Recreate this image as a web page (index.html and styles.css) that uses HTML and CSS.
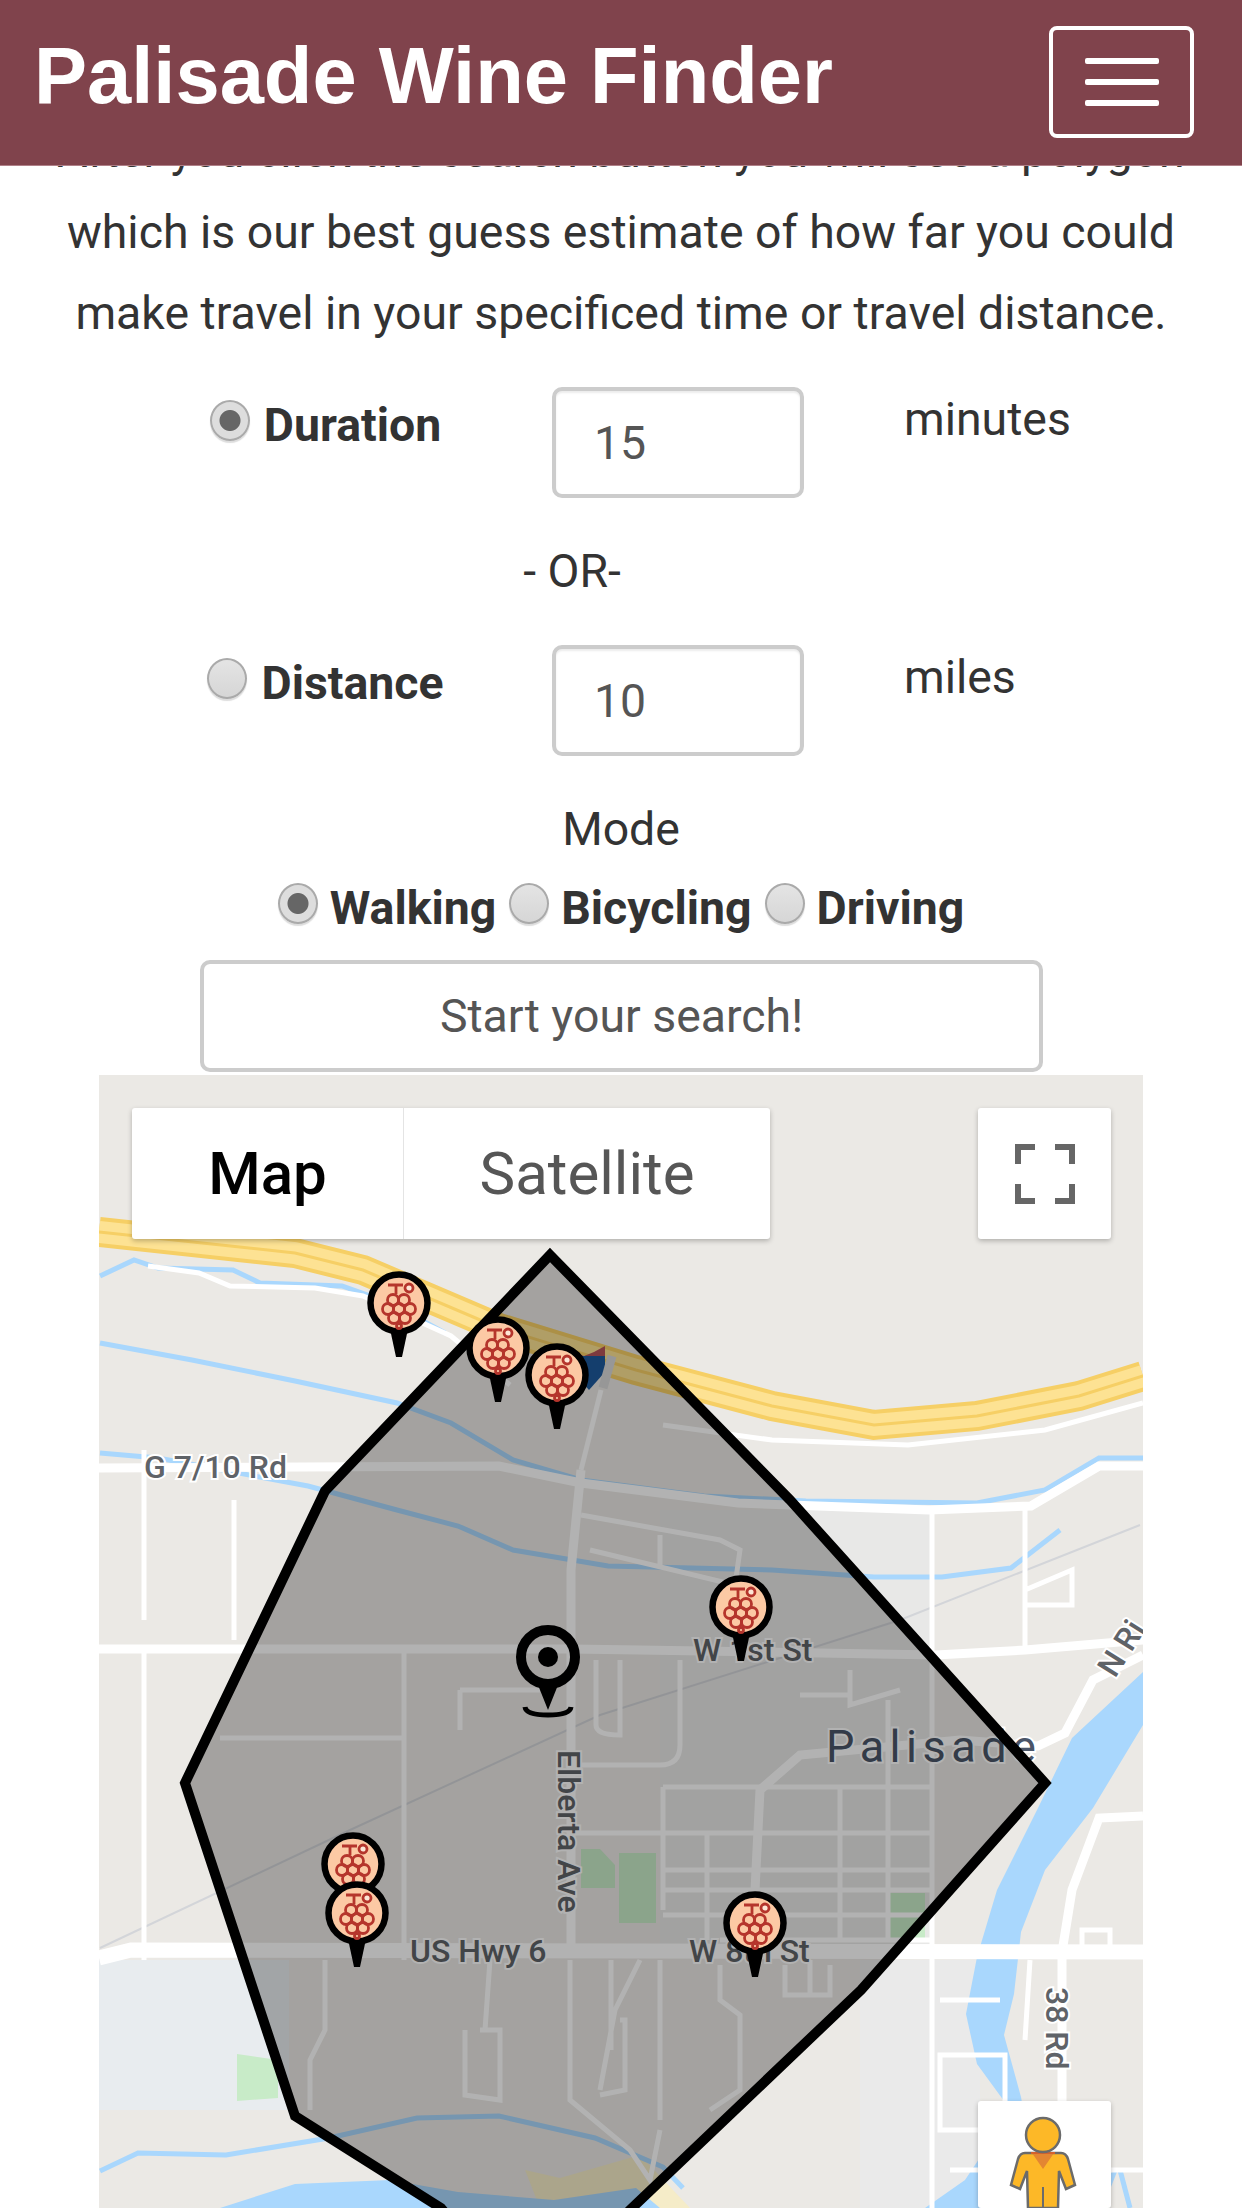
FILE: index.html
```html
<!DOCTYPE html>
<html lang="en">
<head>
  <meta charset="UTF-8">
  <title>Palisade Wine Finder</title>
  <link rel="stylesheet" href="styles.css">
</head>
<body>
  <header class="navbar">
    <span class="brand">Palisade Wine Finder</span>
    <button class="toggle" type="button" aria-label="Menu"><i></i><i></i><i></i></button>
  </header>

  <main>
    <p class="intro">After you click the search button you will see a polygon<br>which is our best guess estimate of how far you could<br>make travel in your specificed time or travel distance.</p>

    <div class="limit-row">
      <label class="limit-label"><input type="radio" name="limit" checked>Duration</label>
      <input class="limit-input" type="text" value="15">
      <span class="limit-unit">minutes</span>
    </div>
    <div class="or">- OR-</div>
    <div class="limit-row">
      <label class="limit-label"><input type="radio" name="limit">Distance</label>
      <input class="limit-input" type="text" value="10">
      <span class="limit-unit">miles</span>
    </div>

    <div class="mode-title">Mode</div>
    <div class="mode-row">
      <label><input type="radio" name="mode" checked>Walking</label>
      <label><input type="radio" name="mode">Bicycling</label>
      <label><input type="radio" name="mode">Driving</label>
    </div>
    <button class="search" type="button">Start your search!</button>

    <div class="map">
      <svg class="map-canvas" width="1044" height="1133" viewBox="99 1075 1044 1133">
        <defs>
          <symbol id="wine-pin" viewBox="-35 -35 70 100" overflow="visible">
            <path d="M-9 26 L-3 54 H3 L9 26 Z" fill="#000"/>
            <circle r="28.5" fill="#fcc9a4" stroke="#000" stroke-width="6.5"/>
            <g fill="none" stroke="#b5352c" stroke-width="2.8">
              <path d="M-11 -18 H4 M-3 -18 V-9"/>
              <circle cx="-6" cy="-3" r="5.5"/>
              <circle cx="5" cy="-3" r="5.5"/>
              <circle cx="-11" cy="6" r="5.5"/>
              <circle cx="0" cy="6" r="5.5"/>
              <circle cx="11" cy="6" r="5.5"/>
              <circle cx="-5" cy="15" r="5.5"/>
              <circle cx="6" cy="15" r="5.5"/>
              <circle cx="0" cy="23" r="2.5"/>
              <circle cx="10" cy="-15" r="4" fill="#fde6d6"/>
            </g>
          </symbol>
        </defs>

        <rect x="99" y="1075" width="1044" height="1133" fill="#ebe9e5"/>
        <rect x="99" y="1960" width="190" height="150" fill="#e8ecef"/>
        <rect x="660" y="1510" width="270" height="440" fill="#e8e8e7"/>
        <rect x="860" y="1960" width="120" height="250" fill="#eaeaea"/>

        <path class="park" d="M237 2054 L278 2060 L278 2098 L237 2101 Z"/>
        <path class="park" d="M581 1849 L600 1849 L615 1865 L615 1888 L581 1888 Z"/>
        <path class="park" d="M619 1853 L656 1853 L656 1923 L619 1923 Z"/>
        <path class="park" d="M888 1893 L925 1893 L925 1940 L888 1940 Z"/>
        <path class="sand" d="M525 2170 L560 2178 L640 2155 L690 2208 L540 2208 Z"/>

        <!-- water -->
        <path class="river" d="M1143 1672 L1072 1738 L1038 1808 L997 1890 L977 1957 L966 2014 L977 2064 L1004 2101 L985 2150 L965 2180 L925 2208 L1040 2208 L1021 2097 L1004 2035 L1014 1994 L1021 1932 L1045 1870 L1093 1808 L1143 1725 Z"/>
        <path class="river" d="M220 2208 L295 2184 L390 2180 L458 2192 L554 2200 L636 2188 L660 2208 Z"/>
        <path class="creek" d="M100 1276 L134 1260 L158 1268 L233 1270 L260 1283 L342 1286 L390 1303 L445 1333"/>
        <path class="creek" d="M100 1343 L192 1360 L295 1381 L397 1403 L451 1423 L513 1460 L581 1480 L704 1496 L806 1501 L977 1503 L1045 1490 L1099 1458 L1143 1458"/>
        <path class="creek" d="M100 1453 L158 1458 L308 1486 L397 1510 L458 1526 L513 1550 L608 1566 L772 1570 L874 1577 L942 1577 L1011 1568 L1060 1530"/>
        <path class="creek" d="M100 2171 L138 2153 L226 2155 L329 2138 L417 2118 L499 2116 L595 2138 L663 2167 L683 2188"/>
        <path class="creek" d="M1120 2170 L1130 2208 M1100 2208 L1115 2170"/>

        <!-- roads -->
        <path class="rail" d="M100 1948 L350 1830 L600 1715 L900 1620 L1140 1525"/>
        <path class="road-sm" d="M148 1266 L199 1273 L230 1286 L315 1288 L363 1296 L451 1336 L510 1385"/>
        <path class="road-sm" d="M663 1425 L772 1440 L908 1445 L1045 1430 L1143 1403"/>
        <path class="road-sm" d="M601 1390 L581 1470"/>
        <path class="road-sm" d="M144 1450 V1620 M234 1500 V1640 M144 1650 V1960"/>
        <path class="road" d="M99 1468 L499 1466 L581 1483 L738 1503 L929 1510 L1031 1506 L1099 1466 L1143 1466"/>
        <path class="road-sm" d="M581 1515 L720 1540 L740 1550 L735 1585 L590 1550 M660 1535 V1565"/>
        <path class="road" d="M581 1470 L571 1570 L571 1944"/>
        <path class="road" d="M99 1649 H571 L640 1650 L936 1655 L1025 1650 L1143 1640"/>
        <path class="road-lg" d="M99 1958 L131 1950 L1143 1952"/>
        <path class="road" d="M1143 1655 L1093 1680 L1065 1733 L1038 1746 L960 1740 L800 1755 L760 1790 L752 1950"/>
        <path class="road" d="M1143 1816 L1099 1818 L1072 1890 L1062 1952 L1062 2101"/>
        <path class="road-sm" d="M663 1787 V1910 M707 1833 V1940 M840 1787 V1940 M888 1700 V1940 M932 1510 V2208 M1025 1510 V1650 M1025 1590 L1072 1570 V1605 H1025"/>
        <path class="road-sm" d="M663 1787 H932 M575 1833 H932 M663 1870 H932 M663 1890 H932 M663 1915 H932 M720 1940 H932"/>
        <path class="road-sm" d="M404 1650 V1960 M220 1738 H404 M596 1660 V1725 Q596 1735 620 1735 V1660 M680 1660 V1745 Q680 1765 660 1765 H580"/>
        <path class="road-sm" d="M460 1690 H540 M460 1690 V1730 M850 1670 V1705 L900 1690 M800 1695 H850"/>
        <path class="road-sm" d="M611 1960 V2050 M640 1960 L615 2010 L600 2090 M660 1960 V2120 M620 2020 H625 V2090 L600 2095 M480 2030 H500 V2100 L465 2095 V2030 M570 1960 V2100 L630 2150 L650 2180 L660 2130"/>
        <path class="road-sm" d="M325 1960 V2030 L310 2060 V2110 M490 1960 L485 2030 M720 1965 V2000 L740 2015 V2090 L710 2110"/>
        <path class="road-sm" d="M785 1965 V1995 H830 V1965 M810 1960 V1995 M940 2000 H1000 M940 2055 V2130 H1005 V2055 Z M1000 2170 H950 M1030 1960 L1025 2040"/>
        <path class="road-sm" d="M1082 1930 H1110 V1950 H1082 Z M1143 2170 H1090"/>

        <!-- I-70 -->
        <path d="M1143 1376 L1079 1396 L977 1416 L874 1425 L772 1406 L636 1370 L499 1328 L363 1270 L295 1253 L99 1232" class="hwy-base"/>
        <path d="M1143 1376 L1079 1396 L977 1416 L874 1425 L772 1406 L636 1370 L499 1328 L363 1270 L295 1253 L99 1232" class="hwy-light"/>
        <path d="M1143 1376 L1079 1396 L977 1416 L874 1425 L772 1406 L636 1370 L499 1328 L363 1270 L295 1253 L99 1232" class="hwy-base hwy-mid"/>
        <path d="M573 1352 L584 1356 L594 1352 L605 1346 L605 1356 L573 1356 Z" fill="#b5535a"/>
        <path d="M573 1356 H605 V1372 L589 1390 L573 1372 Z" fill="#1e5a9c"/>
        <path class="road-sm grey" d="M612 1356 L603 1388"/>

        <!-- labels -->
        <text class="label" x="144" y="1478">G 7/10 Rd</text>
        <text class="label" x="693" y="1661">W 1st St</text>
        <text class="label" x="689" y="1962">W 8th St</text>
        <text class="label" x="410" y="1962">US Hwy 6</text>
        <text class="label town" x="826" y="1762">Palisade</text>
        <text class="label" transform="translate(558 1750) rotate(90)">Elberta Ave</text>
        <text class="label" transform="translate(1046 1987) rotate(90)">38 Rd</text>
        <text class="label" transform="translate(1115 1679) rotate(-58)">N Ri</text>

        <path class="area" d="M550 1255 L790 1500 L1045 1783 L861 1990 L632 2208 L560 2280 L500 2280 L441 2208 L295 2116 L185 1783 L325 1491 Z"/>

        <use href="#wine-pin" x="364" y="1268" width="70" height="100"/>
        <use href="#wine-pin" x="463" y="1313" width="70" height="100"/>
        <use href="#wine-pin" x="522" y="1340" width="70" height="100"/>
        <use href="#wine-pin" x="706" y="1572" width="70" height="100"/>
        <use href="#wine-pin" x="318" y="1829" width="70" height="100"/>
        <use href="#wine-pin" x="322" y="1878" width="70" height="100"/>
        <use href="#wine-pin" x="720" y="1888" width="70" height="100"/>

        <!-- start point -->
        <g>
          <path d="M525 1707 Q526 1715 548 1715 Q570 1715 571 1707" fill="none" stroke="#000" stroke-width="5"/>
          <path d="M538 1685 L548 1710 L558 1685 Z" fill="#000"/>
          <circle cx="548" cy="1657" r="27" fill="none" stroke="#000" stroke-width="10"/>
          <circle cx="548" cy="1657" r="10" fill="#000"/>
        </g>
      </svg>

      <div class="map-type">
        <span class="map-type-on">Map</span>
        <span class="map-type-off">Satellite</span>
      </div>
      <button class="map-btn map-full" type="button" aria-label="Fullscreen">
        <svg width="60" height="60" viewBox="0 0 60 60"><path d="M3 20 V3 H20 M40 3 H57 V20 M3 40 V57 H20 M40 57 H57 V40" fill="none" stroke="#666" stroke-width="6"/></svg>
      </button>
      <button class="map-btn map-pegman" type="button" aria-label="Street View">
        <svg width="133" height="107" viewBox="0 0 133 107">
          <path d="M47 52 H83 Q88 52 90 58 L97 84 L88 88 L81 70 L80 107 H50 L49 70 L42 88 L33 84 L40 58 Q42 52 47 52 Z" fill="#fdb827" stroke="#6b6b6b" stroke-width="2.5"/>
          <path d="M65 86 V107" stroke="#6b6b6b" stroke-width="2"/>
          <path d="M54 52 H76 L65 68 Z" fill="#e38632"/>
          <path d="M53 52 H77" stroke="#d5622c" stroke-width="2"/>
          <circle cx="65" cy="34" r="17" fill="#fdb827" stroke="#6b6b6b" stroke-width="2.5"/>
        </svg>
      </button>
    </div>
  </main>
</body>
</html>
```

FILE: styles.css
```css
html, body { margin: 0; padding: 0; height: 2208px; overflow: hidden; background: #fff; }
body { font-family: Roboto, "Liberation Sans", sans-serif; font-size: 46.4px; color: #333; position: relative; }

.navbar { position: absolute; top: 0; left: 0; right: 0; height: 165px; background: #80434c; border-bottom: 1px solid #b08088; display: flex; align-items: center; justify-content: space-between; padding: 0 48px 0 34px; z-index: 2; }
.brand { font-family: "Liberation Sans", Arial, sans-serif; font-weight: bold; font-size: 79.5px; color: #fff; line-height: 1; margin-top: -14px; }
.toggle { width: 145px; height: 112px; margin-top: -2px; background: transparent; border: 4px solid #fff; border-radius: 8px; display: flex; flex-direction: column; justify-content: center; align-items: center; gap: 15px; padding: 0; }
.toggle i { display: block; width: 74px; height: 6px; background: #fff; border-radius: 2px; }

main { padding-top: 111px; }
.intro { margin: 0 0 33px; line-height: 81px; text-align: center; white-space: nowrap; }

input[type=radio] { appearance: none; -webkit-appearance: none; width: 40px; height: 41px; margin: 0; flex: none; border: 2px solid #aaa; border-radius: 50%; background: linear-gradient(#e4e4e4, #d6d6d6); box-shadow: 0 2px 1px #ddd; }
input[type=radio]:checked { background: radial-gradient(circle, #666 0 10px, #ddd 11px); }

.limit-row { display: grid; grid-template-columns: 453px 252px 1fr; height: 111px; margin-left: 99px; }
.limit-label { display: flex; justify-content: center; gap: 14px; padding-top: 8px; font-weight: 700; line-height: 60px; }
.limit-label input { margin-top: 5px; }
.limit-input { box-sizing: border-box; width: 252px; height: 111px; border: 4px solid #ccc; border-radius: 10px; box-shadow: inset 0 2px 2px rgba(0, 0, 0, .08); padding: 0 38px; font: 46.4px Roboto, sans-serif; color: #555; outline: none; }
.limit-unit { padding: 2px 0 0 100px; line-height: 60px; }

.or { width: 1144px; text-align: center; line-height: 147px; }
.mode-title { margin-top: 43px; text-align: center; line-height: 60px; }
.mode-row { display: flex; justify-content: center; gap: 13px; margin-top: 19px; font-weight: 700; line-height: 60px; }
.mode-row label { display: flex; gap: 12px; }
.mode-row input { margin-top: 5px; }

.search { display: block; box-sizing: border-box; width: 843px; height: 112px; margin: 22px 0 3px 200px; background: #fff; border: 4px solid #ccc; border-radius: 10px; font: 46.4px Roboto, sans-serif; color: #555; }

.map { position: relative; width: 1044px; height: 1133px; margin-left: 99px; overflow: hidden; background: #ebe9e5; }
.map-canvas { display: block; }

.park { fill: #c8ebc8; }
.sand { fill: #f5ecc8; }
.river { fill: #a9d7fd; }
.creek { fill: none; stroke: #a9d7fd; stroke-width: 5; }
.road, .road-lg, .road-sm, .rail, .hwy-base, .hwy-light { fill: none; }
.road { stroke: #fff; stroke-width: 9; }
.road-lg { stroke: #fff; stroke-width: 15; }
.road-sm { stroke: #fff; stroke-width: 5; }
.road-sm.grey { stroke: #d8d8d8; stroke-width: 9; }
.rail { stroke: #d3d5d9; stroke-width: 2; }
.hwy-base { stroke: #f6cf65; stroke-width: 30; }
.hwy-light { stroke: #fde293; stroke-width: 22; }
.hwy-mid { stroke-width: 3; }
.label { font: 500 32px Roboto, sans-serif; fill: #5f6368; stroke: #fff; stroke-width: 4px; paint-order: stroke; }
.town { font-size: 45px; font-weight: 400; letter-spacing: 5.5px; fill: #4a5568; }
.area { fill: rgba(0, 0, 0, .3); stroke: #000; stroke-width: 10; stroke-linejoin: miter; }

.map-type { position: absolute; top: 33px; left: 33px; display: flex; height: 131px; width: 638px; background: #fff; border-radius: 3px; box-shadow: 0 2px 5px rgba(0, 0, 0, .25); font-size: 60px; line-height: 131px; text-align: center; }
.map-type-on { width: 271px; border-right: 1px solid #e4e4e4; color: #000; font-weight: 500; }
.map-type-off { flex: 1; color: #565656; }

.map-btn { position: absolute; left: 879px; width: 133px; padding: 0; background: #fff; border: 0; border-radius: 3px; box-shadow: 0 2px 5px rgba(0, 0, 0, .25); }
.map-full { top: 33px; height: 131px; display: flex; align-items: center; justify-content: center; }
.map-pegman { top: 1026px; height: 107px; }
.map-pegman svg { display: block; }
```
